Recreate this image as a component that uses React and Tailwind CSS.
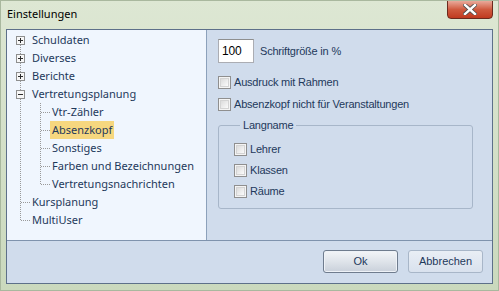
import React from 'react'

const items = [
  { label: 'Schuldaten', level: 0, box: 'plus' },
  { label: 'Diverses', level: 0, box: 'plus' },
  { label: 'Berichte', level: 0, box: 'plus' },
  { label: 'Vertretungsplanung', level: 0, box: 'minus' },
  { label: 'Vtr-Zähler', level: 1 },
  { label: 'Absenzkopf', level: 1, selected: true },
  { label: 'Sonstiges', level: 1 },
  { label: 'Farben und Bezeichnungen', level: 1 },
  { label: 'Vertretungsnachrichten', level: 1, lastChild: true },
  { label: 'Kursplanung', level: 0 },
  { label: 'MultiUser', level: 0, last: true },
]

const DOT = '#9a9a9a'

// one 20x18 cell of tree guide lines
const Guide = ({ top, bottom, right, box }) => (
  <svg width="20" height="18" className="shrink-0" shapeRendering="crispEdges">
    {top && <line x1="10.5" y1="0" x2="10.5" y2="9" stroke={DOT} strokeDasharray="1 1" />}
    {bottom && <line x1="10.5" y1="10" x2="10.5" y2="18" stroke={DOT} strokeDasharray="1 1" />}
    {right && <line x1="11" y1="9.5" x2="20" y2="9.5" stroke={DOT} strokeDasharray="1 1" />}
    {box && (
      <>
        <rect x="6.5" y="5.5" width="8" height="8" fill="#f7f7f7" stroke="#8e8f8f" />
        <line x1="8" y1="9.5" x2="13" y2="9.5" stroke="#2c2c2c" />
        {box === 'plus' && <line x1="10.5" y1="7" x2="10.5" y2="12" stroke="#2c2c2c" />}
      </>
    )}
  </svg>
)

const TreeRow = ({ item, index }) => {
  const rootCell =
    item.level === 0 ? (
      <Guide top={index > 0} bottom={!item.last} right={!item.box} box={item.box} />
    ) : (
      <Guide top bottom />
    )
  return (
    <div className="flex h-[18px] items-center">
      {rootCell}
      {item.level === 1 && <Guide top bottom={!item.lastChild} right />}
      <span
        className={`px-[2px] leading-[18px] whitespace-nowrap ${item.selected ? 'bg-[#f6d77f]' : ''}`}
      >
        {item.label}
      </span>
    </div>
  )
}

const Checkbox = () => (
  <span className="w-[13px] h-[13px] shrink-0 border border-[#8f8f8f] bg-[#f4f4f4] p-[1px]">
    <span className="block w-full h-full border border-[#d4d4d4] bg-gradient-to-br from-[#dcdcdc] to-[#fbfbfb]" />
  </span>
)

const CheckRow = ({ label, className = '' }) => (
  <label className={`flex h-[13px] items-center gap-[3px] whitespace-nowrap ${className}`}>
    <Checkbox />
    <span className="leading-[13px]">{label}</span>
  </label>
)

export default function App() {
  return (
    <div className="w-[499px] h-[291px] flex flex-col bg-gradient-to-b from-[#dde7d3] to-[#cad9bd] border border-[#a9b89e] overflow-hidden">
      {/* title bar */}
      <div className="h-[28px] flex items-start shrink-0">
        <span
          className="pl-[6px] pt-[5px] text-[11px] text-black"
          style={{ fontFamily: '"Noto Sans", sans-serif' }}
        >
          Einstellungen
        </span>
        <button className="ml-auto mr-[5px] w-[46px] h-[19px] -mt-[1px] rounded-b-[4px] border border-[#6b2a1e] bg-gradient-to-b from-[#e8a99a] via-[#cf5a3f] to-[#c0391f] flex items-center justify-center">
          <svg width="14" height="11" viewBox="0 0 14 11">
            <path d="M2 1 L12 10 M12 1 L2 10" stroke="#4a4a4a" strokeWidth="4" strokeLinecap="square" />
            <path d="M2 1 L12 10 M12 1 L2 10" stroke="#ffffff" strokeWidth="2.4" strokeLinecap="square" />
          </svg>
        </button>
      </div>

      {/* client area */}
      <div className="mx-[5px] h-[255px] flex flex-col border border-[#5d7089] bg-[#d0dcec]">
        <div className="h-[211px] flex border-b border-[#7f93ad]">
          {/* tree */}
          <div
            className="w-[200px] bg-[#f0f6fe] border-r border-[#8ca1bb] pl-[3px] pt-[1px] text-[11px] text-[#1e395b]"
            style={{ fontFamily: '"Noto Sans", sans-serif' }}
          >
            {items.map((item, i) => (
              <TreeRow key={item.label} item={item} index={i} />
            ))}
          </div>

          {/* options */}
          <div
            className="flex-1 pl-[11px] pt-[9px] pr-[19px] text-[11px] tracking-[-0.2px] text-[#1e395b]"
            style={{ fontFamily: '"Liberation Sans", Arial, sans-serif' }}
          >
            <div className="flex items-center gap-[6px]">
              <div className="w-[36px] h-[24px] bg-white border border-[#abadb3] border-t-[#8e8f8f] pl-[3px] pt-[3px] text-[12px] leading-[16px] text-black">
                100
              </div>
              <span>Schriftgröße in %</span>
            </div>
            <CheckRow label="Ausdruck mit Rahmen" className="mt-[13px]" />
            <CheckRow label="Absenzkopf nicht für Veranstaltungen" className="mt-[9px]" />
            <fieldset className="mt-[7px] h-[91px] border border-[#a7b6c9] rounded-[3px] pl-[15px] pt-[11px]">
              <legend className="ml-[6px] px-[3px] leading-[14px]">Langname</legend>
              <CheckRow label="Lehrer" />
              <CheckRow label="Klassen" className="mt-[8px]" />
              <CheckRow label="Räume" className="mt-[8px]" />
            </fieldset>
          </div>
        </div>

        {/* buttons */}
        <div
          className="flex-1 flex justify-end items-start pt-[9px] pr-[9px] gap-[10px] text-[11px] text-[#1e395b]"
          style={{ fontFamily: '"Liberation Sans", Arial, sans-serif' }}
        >
          <button className="w-[75px] h-[23px] rounded-[3px] border border-[#6f7c8e] bg-gradient-to-b from-[#f3f5f8] via-[#dfe4ea] to-[#c9d0da] shadow-[inset_0_0_0_1px_#eef2f7]">
            Ok
          </button>
          <button className="w-[75px] h-[23px] rounded-[3px] border border-[#a8b6c8] bg-gradient-to-b from-[#e9eef5] to-[#d9e2ee]">
            Abbrechen
          </button>
        </div>
      </div>
    </div>
  )
}
